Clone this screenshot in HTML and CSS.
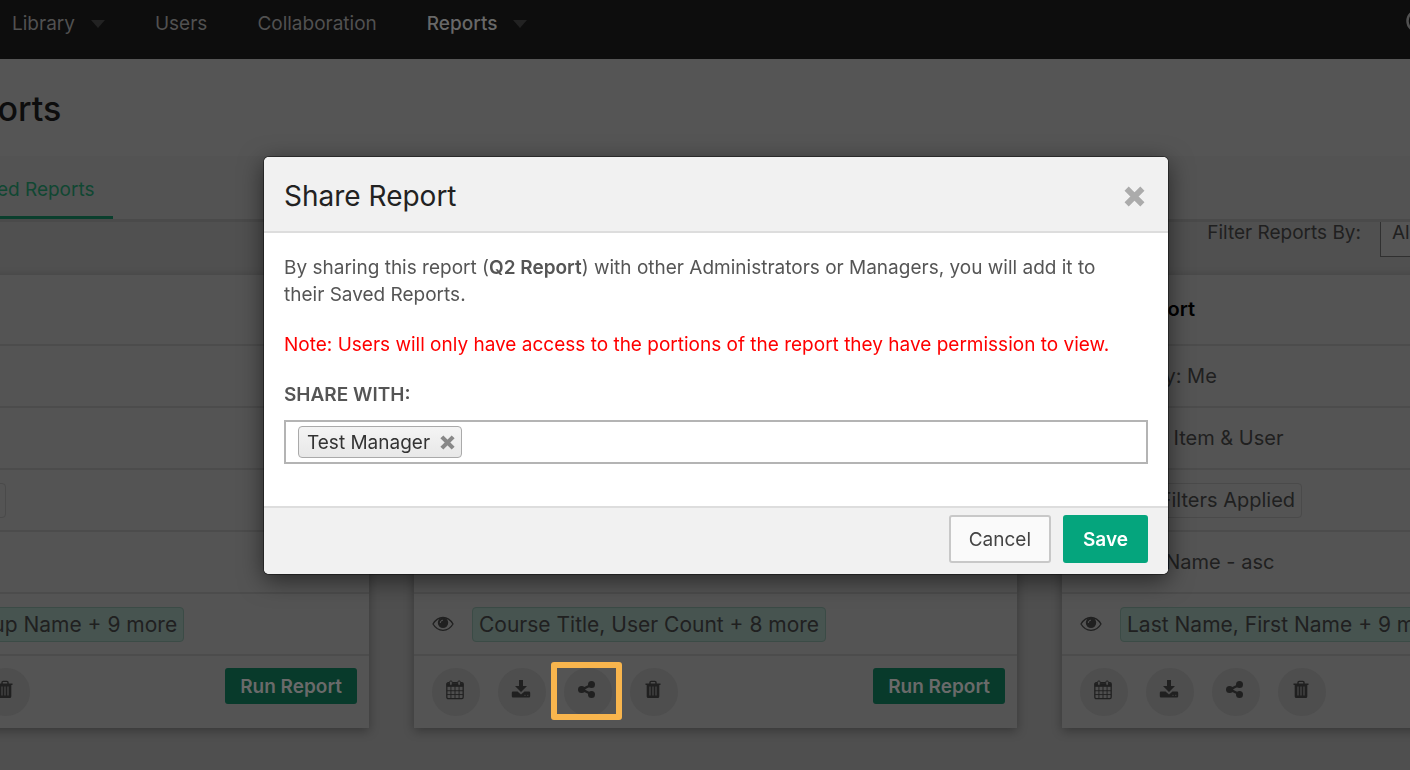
FILE: index.html
```html
<!DOCTYPE html>
<html lang="en">
<head>
<meta charset="utf-8">
<title>Share Report</title>
<link rel="stylesheet" href="styles.css">
</head>
<body>
<svg class="sprite" aria-hidden="true">
  <symbol id="eye" viewBox="0 0 22 16"><path d="M1 8C3.500 3.800 7 1.500 11 1.500S18.500 3.800 21 8c-2.500 4.200-6 6.300-10 6.300S3.500 12.200 1 8z" fill="none" stroke="currentColor" stroke-width="1.300"/><circle cx="11" cy="6.800" r="5.200" fill="currentColor"/><path d="M8.200 7A3 3 0 0 1 11 4.100" fill="none" stroke="#545454" stroke-width="1"/></symbol>
  <symbol id="calendar" viewBox="0 0 20 22"><path d="M2.500 3H17.500A1.500 1.500 0 0 1 19 4.500V19a1.500 1.500 0 0 1-1.500 1.500H2.500A1.500 1.500 0 0 1 1 19V4.500A1.500 1.500 0 0 1 2.500 3z" fill="none" stroke="currentColor" stroke-width="1.400"/><path d="M1 3.500H19V7.500H1z" fill="currentColor"/><path d="M5.500 7v13M10 7v13M14.500 7v13M1 11.800H19M1 16H19" stroke="currentColor" stroke-width="1"/><rect x="4" y="1" width="3" height="5" rx="1.500" fill="#4e4e4e" stroke="currentColor"/><rect x="13" y="1" width="3" height="5" rx="1.500" fill="#4e4e4e" stroke="currentColor"/></symbol>
  <symbol id="download" viewBox="0 0 20 20"><path d="M8 0h4v6h4l-6 6-6-6h4z" fill="currentColor"/><path d="M2 11.500h4.500l3.500 3 3.500-3H18a1.200 1.200 0 0 1 1.200 1.200v3.600a1.200 1.200 0 0 1-1.200 1.200H2a1.200 1.200 0 0 1-1.200-1.200v-3.600A1.200 1.200 0 0 1 2 11.500z" fill="currentColor"/><path d="M13.500 15.300h1M16.300 15.300h1" stroke="#4e4e4e" stroke-width="1"/></symbol>
  <symbol id="share" viewBox="0 0 20 20"><path d="M15 4.500 5 9.500l10 5" fill="none" stroke="currentColor" stroke-width="2.400"/><circle cx="4.600" cy="9.500" r="3.600" fill="currentColor"/><circle cx="14.500" cy="4.500" r="3.500" fill="currentColor"/><circle cx="14.500" cy="14.500" r="3.500" fill="currentColor"/></symbol>
  <symbol id="trash" viewBox="0 0 18 20"><path d="M6 4V2.600a1.200 1.200 0 0 1 1.200-1.200h3.600A1.200 1.200 0 0 1 12 2.600V4" fill="none" stroke="currentColor" stroke-width="1.400"/><path d="M1.500 3.500h15V5h-1.200v11.400a1.600 1.600 0 0 1-1.600 1.600H4.300a1.600 1.600 0 0 1-1.600-1.600V5H1.500z" fill="currentColor"/><path d="M6 6.500v9M9 6.500v9M12 6.500v9" stroke="#4e4e4e" stroke-width="1.100"/></symbol>
  <symbol id="cross" viewBox="0 0 20 20"><path d="M2.500 2.500 17.500 17.500M17.500 2.500 2.500 17.500" fill="none" stroke="currentColor" stroke-width="5.600"/></symbol>
  <symbol id="caret" viewBox="0 0 14 8"><path d="M0 0h14L7 8z" fill="currentColor"/></symbol>
</svg>

<div class="page">
  <nav class="nav">
    <a class="nav-link" href="#">Library <svg class="caret"><use href="#caret"/></svg></a>
    <a class="nav-link" href="#">Users</a>
    <a class="nav-link" href="#">Collaboration</a>
    <a class="nav-link nav-link-active" href="#">Reports <svg class="caret"><use href="#caret"/></svg></a>
    <button class="nav-search" aria-label="Search"><svg class="search-icon" viewBox="0 0 30 30"><circle cx="12" cy="12" r="10.500" fill="none" stroke="currentColor" stroke-width="2.500"/><path d="M20 20l8 8" stroke="currentColor" stroke-width="2.500"/></svg></button>
  </nav>

  <header class="page-head"><h1 class="page-title">Reports</h1></header>
  <div class="tabs"><a class="tab" href="#">Saved Reports</a></div>

  <div class="filters">
    <label class="filter-label" for="filter">Filter Reports By:</label>
    <select class="filter-select" id="filter"><option>All</option></select>
  </div>

  <main class="cards">
    <article class="card">
      <div class="row row-title"></div>
      <div class="row"></div>
      <div class="row"></div>
      <div class="row"><svg class="eye"></svg><span class="chip">No Filters Applied</span></div>
      <div class="row"></div>
      <div class="row"><svg class="eye"><use href="#eye"/></svg><span class="chip chip-green">Team Code, Group Name + 9 more</span></div>
      <div class="actions">
        <button class="round" aria-label="Schedule"><svg class="icon"><use href="#calendar"/></svg></button>
        <button class="round" aria-label="Download"><svg class="icon"><use href="#download"/></svg></button>
        <button class="round" aria-label="Share"><svg class="icon"><use href="#share"/></svg></button>
        <button class="round" aria-label="Delete"><svg class="icon"><use href="#trash"/></svg></button>
        <button class="run">Run Report</button>
      </div>
    </article>
    <article class="card">
      <div class="row row-title"></div>
      <div class="row"></div>
      <div class="row"></div>
      <div class="row"></div>
      <div class="row"></div>
      <div class="row"><svg class="eye"><use href="#eye"/></svg><span class="chip chip-green">Course Title, User Count + 8 more</span></div>
      <div class="actions">
        <button class="round" aria-label="Schedule"><svg class="icon"><use href="#calendar"/></svg></button>
        <button class="round" aria-label="Download"><svg class="icon"><use href="#download"/></svg></button>
        <button class="round round-marked" aria-label="Share"><svg class="icon"><use href="#share"/></svg></button>
        <button class="round" aria-label="Delete"><svg class="icon"><use href="#trash"/></svg></button>
        <button class="run">Run Report</button>
      </div>
    </article>
    <article class="card">
      <div class="row row-title"><h2 class="card-title">User Report</h2></div>
      <div class="row">Shared by: Me</div>
      <div class="row">Grouped: Item &amp; User</div>
      <div class="row"><svg class="eye"></svg><span class="chip">No Filters Applied</span></div>
      <div class="row"><svg class="eye"></svg>Last Name - asc</div>
      <div class="row"><svg class="eye"><use href="#eye"/></svg><span class="chip chip-green">Last Name, First Name + 9 more</span></div>
      <div class="actions">
        <button class="round" aria-label="Schedule"><svg class="icon"><use href="#calendar"/></svg></button>
        <button class="round" aria-label="Download"><svg class="icon"><use href="#download"/></svg></button>
        <button class="round" aria-label="Share"><svg class="icon"><use href="#share"/></svg></button>
        <button class="round" aria-label="Delete"><svg class="icon"><use href="#trash"/></svg></button>
        <button class="run">Run Report</button>
      </div>
    </article>
  </main>
</div>

<div class="overlay">
  <section class="dialog" role="dialog" aria-modal="true" aria-labelledby="dialog-title">
    <header class="dialog-head">
      <h2 class="dialog-title" id="dialog-title">Share Report</h2>
      <button class="close" aria-label="Close"><svg class="close-icon"><use href="#cross"/></svg></button>
    </header>
    <div class="dialog-body">
      <p class="text">By sharing this report (<strong class="strong">Q2 Report</strong>) with other Administrators or Managers, you will add it to their Saved Reports.</p>
      <p class="text note">Note: Users will only have access to the portions of the report they have permission to view.</p>
      <label class="field-label" for="share-with">SHARE WITH:</label>
      <div class="field">
        <span class="tag">Test Manager <button class="tag-remove" aria-label="Remove Test Manager"><svg class="tag-icon"><use href="#cross"/></svg></button></span>
        <input class="field-input" id="share-with" type="text">
      </div>
    </div>
    <footer class="dialog-foot">
      <button class="btn">Cancel</button>
      <button class="btn btn-save">Save</button>
    </footer>
  </section>
</div>
</body>
</html>
```

FILE: styles.css
```css
* { box-sizing: border-box; }
body {
  margin: 0;
  background: #4f4f4f;
  color: #202020;
  font: 19px/27px Inter, "Liberation Sans", sans-serif;
  overflow: hidden;
}
button, input, select { font: inherit; color: inherit; }
button { padding: 0; border: 0; background: none; }
h1, h2, p { margin: 0; }
.sprite { position: absolute; width: 0; height: 0; }
.page { min-height: 100vh; overflow: hidden; }

.nav {
  display: flex;
  align-items: center;
  gap: 50px;
  height: 59px;
  padding: 0 0 12px 12px;
  background: #0d0d0d;
}
.nav-link { display: flex; align-items: center; gap: 16px; color: #515151; text-decoration: none; }
.nav-link-active { color: #686868; font-weight: 500; }
.caret { width: 14px; height: 8px; color: #222; }
.nav-search { display: flex; margin: 0 -26px 0 auto; color: #515151; }
.search-icon { width: 30px; height: 30px; }

.page-head { height: 97px; padding: 29px 0; margin-left: -65px; background: #555; }
.page-title { font-size: 34px; line-height: 42px; font-weight: 500; color: #0d0d0d; }
.tabs {
  display: flex;
  height: 66px;
  background: #535353;
  border-bottom: 3px solid #4a4a4a;
}
.tab {
  height: 63px;
  padding: 20px 18px 0;
  margin-left: -54px;
  border-bottom: 3px solid #0a3f2d;
  color: #104732;
  text-decoration: none;
}
.filters {
  display: flex;
  justify-content: flex-end;
  align-items: center;
  gap: 19px;
  height: 53px;
  padding-bottom: 33px;
  margin-right: -170px;
  background: #505050;
  overflow: hidden;
}
.filter-select {
  appearance: none;
  flex: none;
  width: 200px;
  height: 50px;
  padding: 0 11px;
  border: 1px solid #303030;
  border-radius: 0;
  background: #555;
}

.cards {
  display: grid;
  grid-template-columns: repeat(3, minmax(0, 1fr));
  gap: 45px;
  margin: 0 -255px 0 -234px;
}
.card { background: #545454; box-shadow: 0 3px 10px rgba(0, 0, 0, .3); }
.row {
  display: flex;
  align-items: center;
  height: 62px;
  padding: 0 18px;
  border-bottom: 2px solid #4c4c4c;
  font-size: 20px;
}
.row-title { height: 71px; }
.card-title { font-size: 20px; font-weight: 600; color: #000; }
.eye { flex: none; width: 22px; height: 16px; margin-right: 18px; }
.chip { padding: 3px 6px; border: 1px solid #4a4a4a; border-radius: 4px; white-space: nowrap; }
.chip-green { background: #475450; border-color: #3b4b46; font-size: 21px; }
.actions { display: flex; gap: 18px; padding: 12px 12px 12px 18px; }
.round {
  display: flex;
  align-items: center;
  justify-content: center;
  width: 48px;
  height: 48px;
  padding: 0 3px 4px 0;
  border-radius: 50%;
  background: #4e4e4e;
}
.round-marked { position: relative; }
.round-marked::after {
  content: "";
  position: absolute;
  inset: -6px -10px -4px -13px;
  border: 6px solid #f8b54d;
  border-radius: 3px;
}
.icon { width: 20px; height: 20px; }
.run {
  height: 36px;
  padding: 0 15px;
  margin-left: auto;
  border-radius: 3px;
  background: #083a2b;
  color: #6a6a6a;
  font-weight: 600;
}

.overlay { position: fixed; inset: 0; padding: 157px 242px 0 264px; }
.dialog {
  overflow: hidden;
  border-radius: 5px;
  background: #fff;
  color: #555;
  box-shadow: 0 0 0 1px rgba(0, 0, 0, .4), 0 6px 24px rgba(0, 0, 0, .55);
}
.dialog-head {
  display: flex;
  align-items: center;
  justify-content: space-between;
  height: 76px;
  padding: 4px 23px 0 20px;
  background: #f1f1f1;
  border-bottom: 2px solid #ddd;
}
.dialog-title { font-size: 28px; line-height: 36px; font-weight: 400; color: #222; }
.close { display: flex; color: #ababab; }
.close-icon { width: 21px; height: 21px; }
.dialog-body { padding: 21px 20px 42px; }
.text { padding-right: 16px; margin-bottom: 23px; }
.strong { font-weight: 600; }
.note { color: #f00; }
.field-label { display: block; margin-bottom: 12px; font-weight: 600; color: #555; }
.field { display: flex; align-items: center; height: 44px; padding: 0 12px; border: 2px solid #b4b4b4; }
.tag {
  display: flex;
  align-items: center;
  gap: 10px;
  flex: none;
  height: 32px;
  padding: 0 6px 0 8px;
  border: 1px solid #aaa;
  border-radius: 4px;
  background: linear-gradient(#f4f4f4, #e8e8e8);
  color: #333;
}
.tag-remove { display: flex; color: #888; }
.tag-icon { width: 15px; height: 15px; }
.field-input { flex: 1; min-width: 0; border: 0; outline: 0; background: none; }
.dialog-foot {
  display: flex;
  justify-content: flex-end;
  gap: 12px;
  padding: 7px 20px 11px;
  background: #f1f1f1;
  border-top: 2px solid #ddd;
}
.btn { height: 48px; padding: 0 18px; border: 2px solid #c8c8c8; border-radius: 3px; background: #fafafa; color: #444; }
.btn-save { border-color: #05a57d; background: #05a57d; color: #fff; font-weight: 600; }
```
